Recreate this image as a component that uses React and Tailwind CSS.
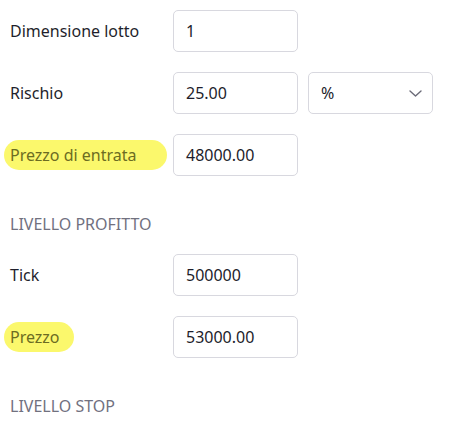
import React from 'react';

const Field = ({ value }) => (
    <div className="w-[125px] h-[42px] border border-[#d8d8df] rounded-[5px] flex items-center px-3 text-[#1d1d2b]">
        {value}
    </div>
);

const Row = ({ label, highlight, wide, children }) => (
    <div className="flex items-center h-[42px]">
        <div className="w-[163px] shrink-0">
            {highlight ? (
                <span
                    className="inline-block -ml-[6px] pl-[6px] py-[3px] bg-[#fbf86c] text-[#6c6c22] rounded-full"
                    style={{ paddingRight: wide }}
                >
                    {label}
                </span>
            ) : (
                <span className="text-[#1f1f2c]">{label}</span>
            )}
        </div>
        {children}
    </div>
);

const Header = ({ children }) => (
    <div className="h-5 mt-[18px] flex items-center uppercase text-[#71717f]">{children}</div>
);

export default function App() {
    return (
        <div
            className="w-[465px] h-[433px] bg-white px-[10px] pt-[10px] flex flex-col gap-5 text-[16px] overflow-hidden"
            style={{ fontFamily: '"Noto Sans", "Open Sans", sans-serif' }}
        >
            <Row label="Dimensione lotto">
                <Field value="1" />
            </Row>
            <Row label="Rischio">
                <div className="flex gap-[10px]">
                    <Field value="25.00" />
                    <div className="w-[125px] h-[42px] border border-[#d8d8df] rounded-[5px] flex items-center justify-between pl-3 pr-[10px] text-[#1d1d2b]">
                        %
                        <svg width="13" height="7" viewBox="0 0 13 7" fill="none" className="text-[#6b6b78]">
                            <path d="M1 1l5.5 5L12 1" stroke="currentColor" strokeWidth="1.4" strokeLinecap="round" strokeLinejoin="round" />
                        </svg>
                    </div>
                </div>
            </Row>
            <Row label="Prezzo di entrata" highlight wide="30px">
                <Field value="48000.00" />
            </Row>
            <Header>Livello profitto</Header>
            <Row label="Tick">
                <Field value="500000" />
            </Row>
            <Row label="Prezzo" highlight wide="14px">
                <Field value="53000.00" />
            </Row>
            <Header>Livello stop</Header>
        </div>
    );
}
